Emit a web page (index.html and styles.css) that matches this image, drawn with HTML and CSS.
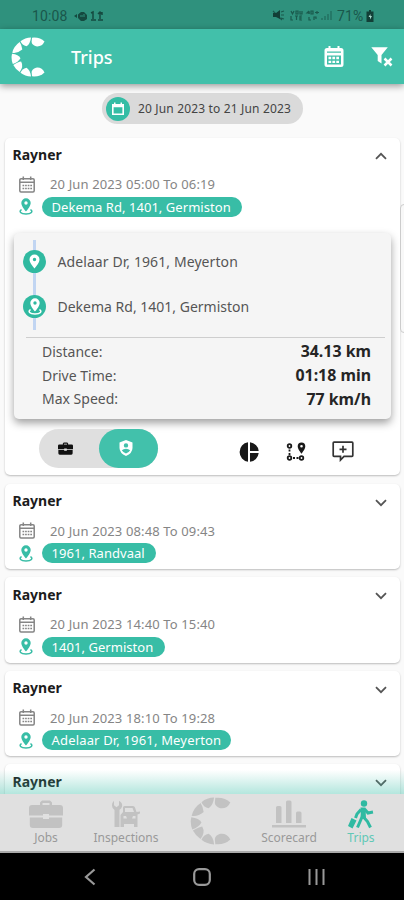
FILE: index.html
```html
<!DOCTYPE html>
<html lang="en">
<head>
<meta charset="utf-8">
<title>Trips</title>
<link rel="stylesheet" href="styles.css">
</head>
<body>
<svg class="defs" width="0" height="0">
  <symbol id="cal" viewBox="0 0 16 17"><path d="M2 2.800h12a1.200 1.200 0 0 1 1.200 1.200v10.800a1.200 1.200 0 0 1-1.200 1.200H2a1.200 1.200 0 0 1-1.200-1.200V4A1.200 1.200 0 0 1 2 2.800zM1 6.300h14M4.300.5v3.500M11.700.5v3.500" fill="none" stroke="currentColor" stroke-width="1.500"/><path d="M3.500 9.500h9.500M3.500 12.500h9.500" stroke="currentColor" stroke-width="1.700" stroke-dasharray="1.700 .9"/></symbol>
  <symbol id="pin" viewBox="0 0 14 17"><path fill="currentColor" fill-rule="evenodd" d="M7 .3a4.700 4.700 0 0 0-4.700 4.700c0 3.400 4.700 8.500 4.700 8.500s4.700-5.100 4.700-8.500A4.700 4.700 0 0 0 7 .3zm0 3a1.700 1.700 0 1 1 0 3.400 1.700 1.700 0 0 1 0-3.400z"/><path d="M2.600 11.700C-.5 13.300 1.500 16 7 16s7.500-2.700 4.400-4.300" fill="none" stroke="currentColor" stroke-width="1.500"/></symbol>
  <symbol id="chev" viewBox="0 0 12 8"><path d="M1 1.200l5 5 5-5" fill="none" stroke="currentColor" stroke-width="1.800"/></symbol>
  <symbol id="logo" viewBox="0 0 34 40"><g fill="currentColor"><path d="M21 .7Q29 0 33.500 4.500 31 10 25 9.300 21 8 20.600 5z"/><path d="M20 .5Q14 .6 9.500 4.300 11 8.300 15.500 9.300 19.300 7 20 .5z"/><path d="M8.700 5Q2.500 9.500 1.300 15.700q5 1 10-3.200Q10.800 8 8.700 5z"/><path d="M1 16.800q-1.200 5 .8 10.200 5.500-1.700 7.700-5.700Q7.500 17.500 1 16.800z"/><path d="M21 39.300q8 .7 12.500-3.800-2.500-5.500-8.500-4.800-4 1.300-4.400 4.300z"/><path d="M20 39.500q-6-.1-10.500-3.800 1.500-4 6-5 3.800 2.300 4.500 8.800z"/><path d="M8.700 35Q4 31.500 2.300 28q5-3.200 7.800-3.500 2.800 5-1.400 10.500z"/></g></symbol>
  <symbol id="case" viewBox="0 0 34 28"><path fill="currentColor" fill-rule="evenodd" d="M11 5V2.500L13 .5h8l2 2V5h8q3 0 3 3v7.500H20V14h-6v1.500H0V8q0-3 3-3zm2.500 0h7V3h-7zM.8 17.500H14V19h6v-1.500h13.200V25q0 3-3 3H3.800q-3 0-3-3z"/></symbol>
</svg>
<div class="phone">
  <header class="status">
    <span class="clock">10:08</span>
    <svg class="status-left" width="32" height="12" viewBox="0 0 32 12"><path d="M1 6l3-2v4zM5 4.500L8 2h3l3 3v4l-3 2H8L5 8z" fill="#154a40"/><path d="M7 6h3M11 4v3" stroke="#2f917d"/><path d="M18 3l2-1v7M18 10h5M27 2v7M25 4l2-2 2 2M25 10h5M29 2v3" fill="none" stroke="#154a40" stroke-width="1.500"/></svg>
    <svg class="status-right" width="62" height="13" viewBox="0 0 62 13"><g fill="none" stroke="#1a5a4d" stroke-width="1.200"><path d="M1 2l9 9M9 3l3-1M9 6h3M9 9l3 1"/><path d="M19 2l1.500 3L22 2M24 2h2v3h-2zM28 2v3h2V2M19 7v4h2M23 7h3M24.500 7v4M30 7h-2v4h2M28 9h2"/><path d="M37 2l-2 2h3M37 2v3M39 2h2v3h-2zM43 3.500h4M45 2v3M37 8v3h2M42 11V8h2v2"/><path d="M50 11V9M53 11V7M56 11V5M59 11V2" opacity=".7"/></g><path d="M1 4h3l4-3v9L4 8H1z" fill="#123f37"/></svg>
    <span class="battery">71%</span>
    <svg class="cell" width="8" height="12" viewBox="0 0 8 12"><path d="M3 0h2v1.500h2.500V12H.5V1.500H3z" fill="#123f37"/><path d="M4.500 4L2.500 7H4v2.500L6 6H4.500z" fill="#a9d9cd"/></svg>
  </header>
  <div class="appbar">
    <svg class="logo" width="34" height="40"><use href="#logo"/></svg>
    <h1>Trips</h1>
    <svg class="bar-cal" width="20" height="22" viewBox="0 0 20 22"><path fill="#fff" fill-rule="evenodd" d="M3 2h1.500V0h2v2h7V0h2v2H17q2.500 0 2.500 2.500v14Q19.500 21 17 21H3Q.5 21 .5 18.500v-14Q.5 2 3 2zm0 3.500v1.300h14V5.500zm0 4v9h14v-9z"/><path d="M4.500 12h11.500M4.500 15.800h11.500" stroke="#fff" stroke-width="2.300" stroke-dasharray="2.700 1.200"/></svg>
    <svg class="bar-filter" width="22" height="20" viewBox="0 0 22 20"><path fill="#fff" d="M.3.3h16.500L10.500 8v8.500L6.700 14V8z"/><path d="M13.500 11.500l7 7M20.500 11.500l-7 7" stroke="#fff" stroke-width="2.500"/></svg>
  </div>
  <main>
    <div class="range"><span class="disc"><svg width="14" height="14" viewBox="0 0 14 14"><path fill="#fff" fill-rule="evenodd" d="M1 2h2V.5h1.500V2h5V.5H11V2h2v11H1zm1.600 3.300v6.200h8.800V5.300z"/></svg></span><span class="range-text">20 Jun 2023 to 21 Jun 2023</span></div>

    <section class="card open">
      <div class="head"><b>Rayner</b><svg class="chev up" width="12" height="8"><use href="#chev"/></svg></div>
      <div class="when"><svg width="16" height="17"><use href="#cal"/></svg><span>20 Jun 2023 05:00 To 06:19</span></div>
      <div class="where"><svg width="14" height="17"><use href="#pin"/></svg><span class="pill w1">Dekema Rd, 1401, Germiston</span></div>
      <div class="detail">
        <div class="route">
          <div class="stop"><span class="dot"><svg width="11" height="15" viewBox="0 0 11 15"><path fill="#fff" fill-rule="evenodd" d="M5.500.5a5 5 0 0 0-5 5c0 3.500 5 9 5 9s5-5.500 5-9a5 5 0 0 0-5-5zm0 3.300a1.700 1.700 0 1 1 0 3.400 1.700 1.700 0 0 1 0-3.400z"/></svg></span><span class="s1">Adelaar Dr, 1961, Meyerton</span></div>
          <div class="stop"><span class="dot"><svg width="14" height="17"><use href="#pin"/></svg></span><span class="s2">Dekema Rd, 1401, Germiston</span></div>
        </div>
        <dl>
          <div><dt>Distance:</dt><dd>34.13 km</dd></div>
          <div><dt>Drive Time:</dt><dd>01:18 min</dd></div>
          <div><dt>Max Speed:</dt><dd>77 km/h</dd></div>
        </dl>
      </div>
      <div class="actions">
        <div class="toggle"><span class="half"><svg width="15" height="13"><use href="#case"/></svg></span><span class="half on"><svg width="14" height="16" viewBox="0 0 14 16"><path fill="#fff" fill-rule="evenodd" d="M7 0l6.500 2.500V8q0 5-6.500 8Q.5 13 .5 8V2.500zm0 3.200a2.200 2.200 0 1 0 0 4.400 2.200 2.200 0 0 0 0-4.400zM2.800 10.300Q4.500 13 7 13.400q2.500-.4 4.200-3.100Q9.500 8.700 7 8.700t-4.200 1.600z"/></svg></span></div>
        <svg class="a1" width="20" height="20" viewBox="0 0 20 20"><path fill="#191919" d="M9 .3v19.400A9.800 9.800 0 0 1 9 .3zM11 .3A9.800 9.800 0 0 1 19.700 9H11zM11 11h8.700A9.800 9.800 0 0 1 11 19.700z"/></svg>
        <svg class="a2" width="20" height="20" viewBox="0 0 20 20"><g fill="none" stroke="#191919" stroke-width="1.800"><circle cx="3.500" cy="4" r="1.800"/><circle cx="3.500" cy="16" r="1.800"/><circle cx="15.500" cy="16" r="1.800"/><path d="M3.500 7.500v5.500M7 16h6" stroke-dasharray="2 1.500"/></g><path fill="#191919" fill-rule="evenodd" d="M15.500.5a3.800 3.800 0 0 0-3.800 3.800c0 3 3.800 7.400 3.800 7.400s3.800-4.400 3.800-7.400A3.800 3.800 0 0 0 15.500.5zm0 2.500a1.300 1.300 0 1 1 0 2.600 1.300 1.300 0 0 1 0-2.600z"/></svg>
        <svg class="a3" width="22" height="21" viewBox="0 0 22 21"><path d="M2 1.200h18q.8 0 .8.800v12.500q0 .8-.8.800h-8L8.500 19v-3.700H2q-.8 0-.8-.8V2q0-.8.800-.8zM11 4.800v7M7.500 8.300h7" fill="none" stroke="#333" stroke-width="1.700"/></svg>
      </div>
    </section>

    <section class="card">
      <div class="head"><b>Rayner</b><svg class="chev" width="12" height="8"><use href="#chev"/></svg></div>
      <div class="when"><svg width="16" height="17"><use href="#cal"/></svg><span>20 Jun 2023 08:48 To 09:43</span></div>
      <div class="where"><svg width="14" height="17"><use href="#pin"/></svg><span class="pill w2">1961, Randvaal</span></div>
    </section>
    <section class="card">
      <div class="head"><b>Rayner</b><svg class="chev" width="12" height="8"><use href="#chev"/></svg></div>
      <div class="when"><svg width="16" height="17"><use href="#cal"/></svg><span>20 Jun 2023 14:40 To 15:40</span></div>
      <div class="where"><svg width="14" height="17"><use href="#pin"/></svg><span class="pill w3">1401, Germiston</span></div>
    </section>
    <section class="card">
      <div class="head"><b>Rayner</b><svg class="chev" width="12" height="8"><use href="#chev"/></svg></div>
      <div class="when"><svg width="16" height="17"><use href="#cal"/></svg><span>20 Jun 2023 18:10 To 19:28</span></div>
      <div class="where"><svg width="14" height="17"><use href="#pin"/></svg><span class="pill w4">Adelaar Dr, 1961, Meyerton</span></div>
    </section>
    <section class="card last">
      <div class="head"><b>Rayner</b><svg class="chev" width="12" height="8"><use href="#chev"/></svg></div>
    </section>
    <div class="fade"></div>
    <div class="scroll"></div>
  </main>
  <nav class="tabs">
    <div class="tab t1"><svg width="34" height="28"><use href="#case"/></svg><span>Jobs</span></div>
    <div class="tab t2"><svg width="28" height="28" viewBox="0 0 28 28"><path fill="currentColor" fill-rule="evenodd" d="M2 .8v4.500l2.500 2L7 5.300V.8q4 2 3 6-.5 2-2.500 3V27h-5V10Q0 8.500 0 5.500T2 .8zM12.500 6H21q1.500 0 2 1.500l1.500 4.500 3.500-.5v2l-2.500 1V27H22v-3H12v3H8.500V15l2.500-3V7.500Q11 6 12.500 6zm.5 2v4h9l-1.500-4zm-1.500 8v2.500h3.500L14 16zm12 0H21l-1 2.500h3.500z"/></svg><span>Inspections</span></div>
    <div class="tab mid"><svg width="41" height="48" viewBox="0 0 34 40"><use href="#logo"/></svg></div>
    <div class="tab t4"><svg width="34" height="28" viewBox="0 0 34 28"><path fill="currentColor" d="M4 7.500q0-1.500 1.500-1.500H8q1.500 0 1.500 1.500V23H4zM14 2q0-1.500 1.500-1.500H18q1.500 0 1.500 1.500v21H14zM24 13q0-1.500 1.500-1.500H28q1.500 0 1.500 1.500v10H24zM0 25h34v2.500H0z"/></svg><span>Scorecard</span></div>
    <div class="tab t5"><svg width="26" height="29" viewBox="0 0 26 29"><circle cx="16" cy="3.500" r="3.200" fill="currentColor"/><path d="M15 9l-1 9M13 9.500L9 14l-1.500 4M16.500 9l3.500 4 5-1M14 17l-4.500 10.500M15.500 17l4 4.500 3 6" fill="none" stroke="currentColor" stroke-width="3"/><path d="M12.500 7.500h5l.5 11h-5z" fill="currentColor"/><path d="M3.500 18l5 2.500-4 8L0 26z" fill="currentColor"/></svg><span>Trips</span></div>
  </nav>
  <footer class="system">
    <svg width="12" height="18" viewBox="0 0 12 18"><path d="M10.500 1.500L2 9l8.500 7.500" fill="none" stroke="#999" stroke-width="2.200"/></svg>
    <svg width="18" height="18" viewBox="0 0 18 18"><rect x="1.200" y="1.200" width="15.600" height="15.600" rx="4.800" fill="none" stroke="#999" stroke-width="2.200"/></svg>
    <svg width="17" height="18" viewBox="0 0 17 18"><path d="M1.500 1v16M8.500 1v16M15.500 1v16" stroke="#999" stroke-width="2"/></svg>
  </footer>
</div>
</body>
</html>
```
FILE: styles.css
```css
* { box-sizing: border-box; }
body { margin: 0; font-family: "Noto Sans", "Open Sans", sans-serif; }
svg { display: block; flex: none; }
.defs { position: absolute; }
.phone { width: 404px; height: 900px; overflow: hidden; display: flex; flex-direction: column; background: #fafafa; white-space: nowrap; }
.status { height: 29px; flex: none; background: #2f917d; display: flex; align-items: center; padding: 2px 30px 0 32px; color: #1a574b; font: 14px Roboto, sans-serif; letter-spacing: .1px; }
.clock { width: 41px; }
.status-right { margin-left: auto; margin-right: 3px; }
.battery { width: 29px; }
.appbar { height: 55px; flex: none; background: #42c0aa; display: flex; align-items: center; padding: 0 11px; color: #fff; box-shadow: 0 2px 7px rgba(0,0,0,.4); position: relative; z-index: 2; }
.appbar h1 { margin: 0 0 0 26px; font-size: 18px; font-weight: 500; line-height: 24px; }
.bar-cal { margin-left: auto; margin-right: 27px; }
.bar-filter { margin-top: 1px; }
main { flex: 1; min-height: 0; overflow: hidden; position: relative; padding: 9px 4px 0 5px; display: flex; flex-direction: column; }
.range { align-self: flex-start; flex: none; margin-left: 97px; width: 201px; height: 31px; border-radius: 16px; background: #dadada; display: flex; align-items: center; padding-left: 4px; margin-bottom: 14px; font-size: 12px; letter-spacing: .16px; color: #444; }
.disc { width: 24px; height: 24px; border-radius: 50%; background: #35bda5; display: flex; align-items: center; justify-content: center; margin-right: 8px; }
.card { flex: none; height: 85.600px; margin-bottom: 8px; background: #fff; border-radius: 5px; box-shadow: 0 1px 2px rgba(0,0,0,.25); padding: 7px 13px 0 7.500px; }
.open { height: 337px; margin-bottom: 8.500px; padding-top: 6px; }
.head { height: 20px; display: flex; align-items: center; justify-content: space-between; font-size: 14px; color: #1c1c1c; }
.head b { font-weight: 700; }
.chev { color: #555; margin-top: 4px; }
.up { transform: rotate(180deg); }
.when { margin-top: 10px; height: 20px; display: flex; align-items: center; padding-left: 6px; gap: 15.500px; font-size: 13px; letter-spacing: .13px; color: #858585; }
.where { margin-top: 2.500px; height: 20px; display: flex; align-items: center; padding-left: 6.500px; gap: 9px; color: #38bda6; }
.pill { height: 20px; line-height: 20px; border-radius: 10px; background: #38bda6; color: #fff; font-size: 13px; padding-left: 9.500px; letter-spacing: .05px; }
.w1 { width: 200px; }
.w2 { width: 114px; }
.w3 { width: 123px; }
.w4 { width: 189px; letter-spacing: .17px; }
.detail { margin: 16px -4px 0 1.500px; height: 186px; background: #f5f5f5; border-radius: 5px; box-shadow: 0 4px 8px rgba(0,0,0,.38); padding: 7px 6px 0 9px; color: #555; }
.route { height: 90px; background: linear-gradient(#c1d5f2, #c1d5f2) 9.500px 0 / 3px 90px no-repeat; font-size: 14px; }
.stop { height: 44.500px; display: flex; align-items: center; gap: 11.500px; }
.s1 { letter-spacing: .09px; }
.dot { width: 23px; height: 23px; border-radius: 50%; background: #30b9a0; color: #fff; display: flex; align-items: center; justify-content: center; }
dl { margin: 7px 0 0 3px; border-top: 1px solid #cecece; padding: 2px 14px 0 16px; font-size: 14px; }
dl div { height: 23.700px; display: flex; align-items: center; justify-content: space-between; }
dd { margin: 0; font-weight: 700; font-size: 15.900px; color: #252525; }
.actions { margin: 10px 0 0 26px; height: 39px; display: flex; align-items: center; }
.toggle { width: 119px; height: 39px; border-radius: 20px; background: #dfdfdf; display: flex; }
.half { width: 60px; display: flex; align-items: center; justify-content: center; color: #111; padding-right: 6px; }
.on { width: 59px; border-radius: 20px; background: #42c1ab; padding: 0 5px 0 0; }
.a1 { margin: 7px 0 0 81px; }
.a2 { margin: 7px 0 0 27px; }
.a3 { margin: 7px 0 0 26px; }
.last { height: 90px; }
.fade { position: absolute; left: 0; right: 0; bottom: 0; height: 24px; background: linear-gradient(rgba(66,193,171,0), rgba(66,193,171,.4)); }
.scroll { position: absolute; left: 400px; top: 120px; width: 8px; height: 129px; border: 1px solid #ccc; border-radius: 5px; background: #f8f8f8; }
.tabs { height: 59px; flex: none; background: #e0e0e0; border-bottom: 2px solid #aaa; position: relative; display: flex; color: #c2c2c2; font-size: 12px; }
.tab { display: flex; flex-direction: column; align-items: center; padding-top: 6px; width: 80px; }
.tab span { color: #999; line-height: 18px; margin-top: 1px; }
.t1 { width: 92px; }
.t2 { width: 68px; }
.mid { width: 100px; padding-top: 3px; }
.t4 { width: 58px; }
.t5 { width: 86px; color: #2fbaa2; }
.tab.t5 svg { margin-bottom: -1px; }
.tab.t5 span { color: #61c8b6; }
.system { height: 47px; flex: none; background: #000; display: flex; align-items: center; padding-left: 84px; gap: 97px; }
```
